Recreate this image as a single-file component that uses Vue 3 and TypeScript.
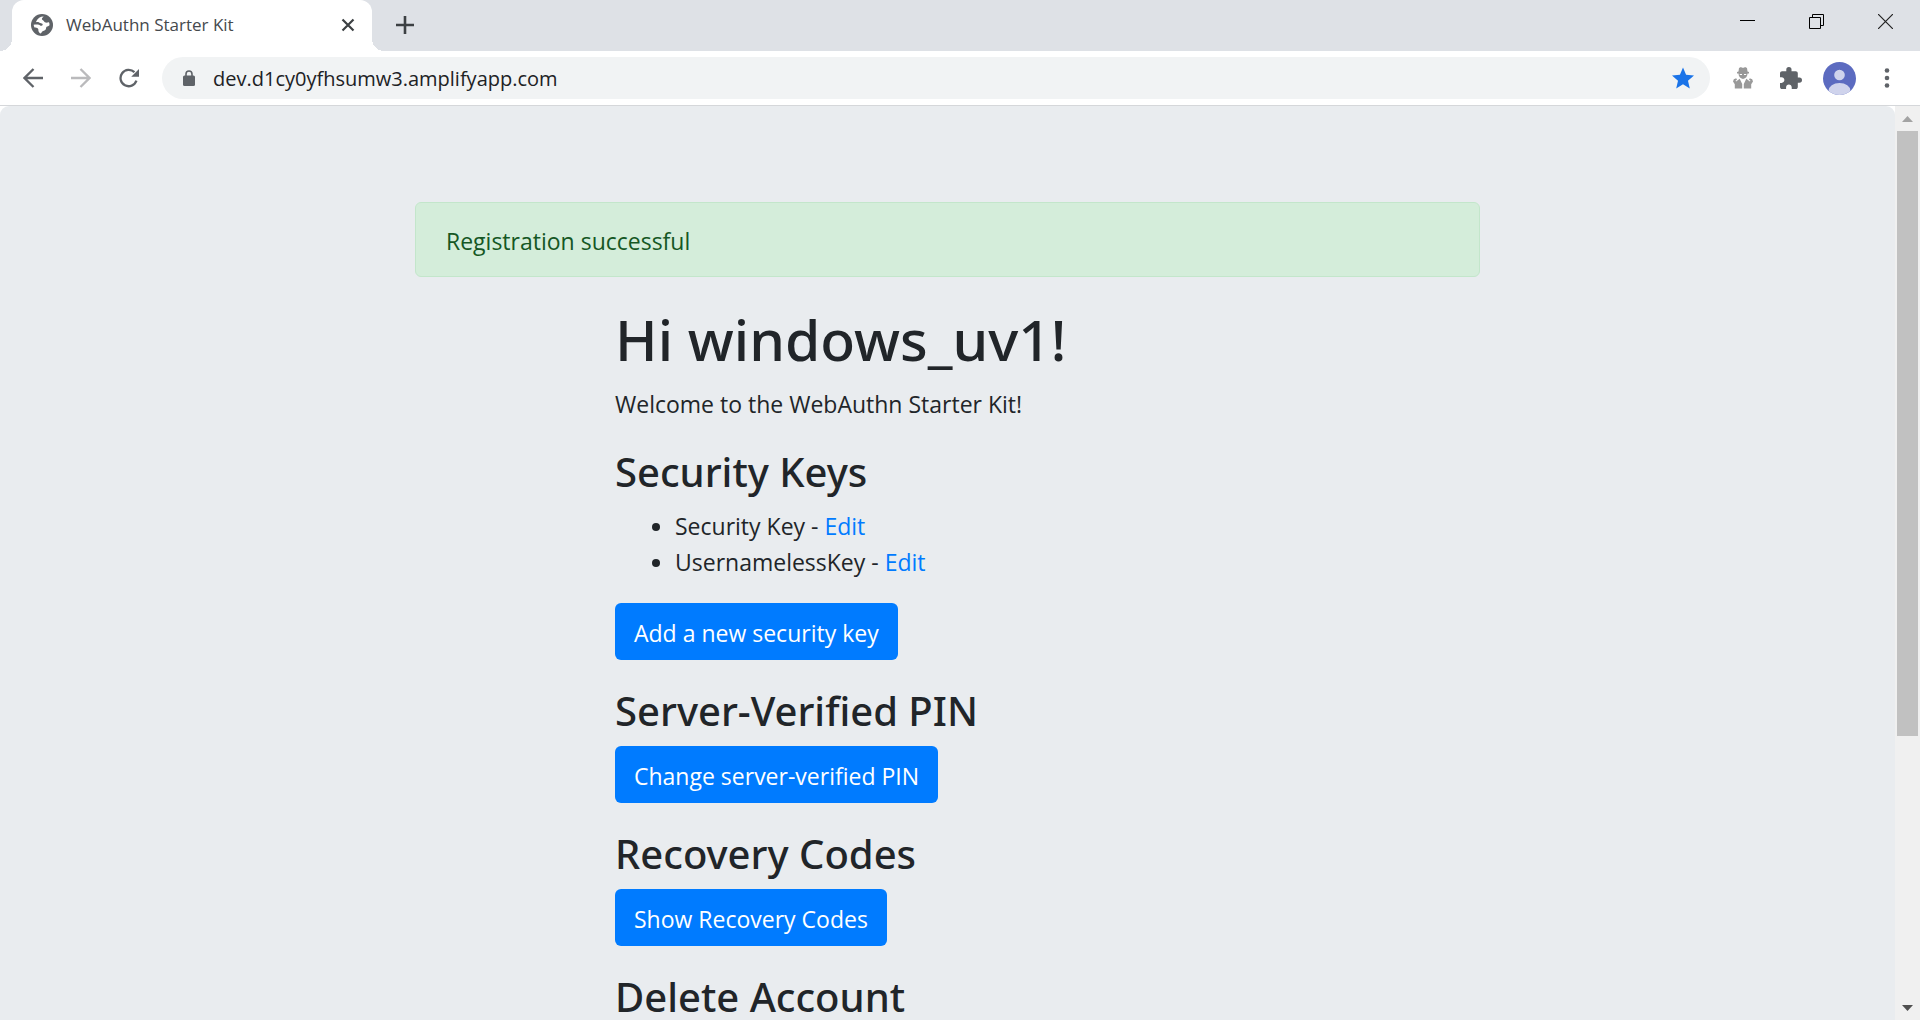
<script setup lang="ts">
import { ref } from 'vue'

interface SecurityKey {
  id: number
  name: string
}

const address = ref('dev.d1cy0yfhsumw3.amplifyapp.com')
const username = ref('windows_uv1')
const keys = ref<SecurityKey[]>([
  { id: 1, name: 'Security Key' },
  { id: 2, name: 'UsernamelessKey' },
])
</script>

<template>
  <div class="browser">
    <header class="tab-strip">
      <div class="tab">
        <svg class="favicon" viewBox="0 0 22 22" aria-hidden="true">
          <circle cx="11" cy="11" r="11" fill="#5f6368" />
          <path
            fill="#fff"
            d="M12.500 2.600C9.500 2.600 6.500 4.500 5 7.800c1.200.8 2.500.2 3.500 1 .9.700 2.200.3 2.900 1 .7.800.1 1.700-.8 1.900-1.200.2-1.600-.5-2.700-1-1.600-.5-3.600-.3-5.300 0 .2 1.100.5 2 .9 2.900 1.500.2 2.500 0 3.400.9.800.8.300 1.900.6 2.800.3.900 1 1.500 1.800 2.200 1.200-.4 1.200-1.500 2-2.100 1-.7 2.400-.6 3.200-1.600.8-.9.3-2.100 1.100-3 .8-.8 2.200-.6 2.900-1.600.1-1-.1-1.900-.4-2.800-1.200-.2-2.300.5-3.500.1-1.200-.4-1.400-1.500-2.400-2.100-.8-.5-1.400-.9-1.300-1.700.1-.7.900-1.200 1.600-2z"
          />
        </svg>
        <span class="tab-title">WebAuthn Starter Kit</span>
        <button class="icon-button" type="button" aria-label="Close tab">
          <svg width="14" height="14" viewBox="0 0 14 14"><path d="M1.500 1.500l11 11M12.500 1.500l-11 11" fill="none" stroke="#3c4043" stroke-width="2.200" /></svg>
        </button>
      </div>
      <button class="icon-button new-tab" type="button" aria-label="New tab">
        <svg width="18" height="18" viewBox="0 0 18 18"><path d="M9 0v18M0 9h18" fill="none" stroke="#3c4043" stroke-width="2.600" /></svg>
      </button>
      <div class="window-controls">
        <button class="icon-button" type="button" aria-label="Minimize">
          <svg width="15" height="15" viewBox="0 0 15 15"><path d="M0 6.500h15" stroke="#000" /></svg>
        </button>
        <button class="icon-button" type="button" aria-label="Restore">
          <svg width="15" height="15" viewBox="0 0 15 15" fill="none" stroke="#000"><path d="M.5 3.500h11v11H.5zM3.500 3.500v-3h11v11h-3" /></svg>
        </button>
        <button class="icon-button" type="button" aria-label="Close">
          <svg width="15" height="15" viewBox="0 0 15 15"><path d="M0 0l15 15M15 0L0 15" stroke="#222" stroke-width="1.200" /></svg>
        </button>
      </div>
    </header>

    <nav class="toolbar">
      <div class="nav-buttons">
        <button class="icon-button" type="button" aria-label="Back">
          <svg width="20" height="20" viewBox="0 0 20 20"><path d="M20 10H2M10.500 1L1.500 10l9 9" fill="none" stroke="#5f6368" stroke-width="2.300" /></svg>
        </button>
        <button class="icon-button" type="button" aria-label="Forward">
          <svg width="20" height="20" viewBox="0 0 20 20"><path d="M0 10h18M9.500 1l9 9-9 9" fill="none" stroke="#bababc" stroke-width="2.300" /></svg>
        </button>
        <button class="icon-button" type="button" aria-label="Reload">
          <svg width="20" height="20" viewBox="0 0 22 22">
            <path d="M19.200 14A9 9 0 1 1 17 4.600" fill="none" stroke="#5f6368" stroke-width="2.500" />
            <path d="M22 1v8.500h-8.500z" fill="#5f6368" />
          </svg>
        </button>
      </div>
      <div class="omnibox">
        <svg class="lock" width="12" height="16" viewBox="0 0 12 16">
          <path d="M3 6V4a3 3 0 0 1 6 0v2" fill="none" stroke="#5f6368" stroke-width="1.600" />
          <rect y="5.500" width="12" height="10.500" rx="1.500" fill="#5f6368" />
        </svg>
        <input v-model="address" class="address" type="text" aria-label="Address" spellcheck="false" />
        <button class="icon-button" type="button" aria-label="Edit bookmark">
          <svg width="22" height="22" viewBox="2 1.500 20 20">
            <path fill="#1a73e8" d="M12 17.270L18.180 21l-1.640-7.030L22 9.240l-7.190-.61L12 2 9.190 8.630 2 9.240l5.460 4.730L5.820 21z" />
          </svg>
        </button>
      </div>
      <div class="actions">
        <button class="icon-button" type="button" aria-label="Incognito extension">
          <svg width="20" height="22" viewBox="0 0 20 22" fill="#999">
            <path d="M5.500 4.500L6 1l2-.9 1 .6h2l1-.6L14 1l.5 3.500 1.500.5v1.500h-1.500c0 3-1.800 5-4.500 5.500-2.700-.5-4.500-2.500-4.500-5.500H4V5z" />
            <path d="M6.800 7h2.200v1H6.800zM11 7h2.200v1H11z" fill="#fff" />
            <path d="M1.800 21.500v-4.300L0 14.600l.8-2.300 2.400-1 .8 1.500-1.500.9.600.9 3.600-2.800L9.200 17v4.500zM18.200 21.500v-4.300l1.800-2.600-.8-2.300-2.400-1-.8 1.500 1.500.9-.6.9-3.600-2.800-2.500 5.200v4.500z" />
          </svg>
        </button>
        <button class="icon-button" type="button" aria-label="Extensions">
          <svg width="22" height="22" viewBox="2 1 21 21">
            <path fill="#5f6368" d="M20.500 11H19V7c0-1.100-.9-2-2-2h-4V3.500a2.500 2.500 0 0 0-5 0V5H4c-1.100 0-1.990.9-1.990 2v3.800H3.500c1.490 0 2.700 1.210 2.700 2.700s-1.210 2.700-2.700 2.700H2V20c0 1.100.9 2 2 2h3.800v-1.500c0-1.490 1.210-2.700 2.700-2.700s2.700 1.210 2.700 2.700V22H17c1.100 0 2-.9 2-2v-4h1.500a2.500 2.500 0 0 0 0-5z" />
          </svg>
        </button>
        <button class="icon-button" type="button" aria-label="Profile">
          <svg width="33" height="33" viewBox="0 0 33 33">
            <clipPath id="avatar-clip"><circle cx="16.500" cy="16.500" r="16.500" /></clipPath>
            <g clip-path="url(#avatar-clip)">
              <path d="M0 0h33v33H0z" fill="#5c6bc0" />
              <circle cx="16.500" cy="13" r="5.300" fill="#cfd3ec" />
              <ellipse cx="16.500" cy="29" rx="11" ry="8" fill="#cfd3ec" />
            </g>
          </svg>
        </button>
        <button class="icon-button" type="button" aria-label="Menu">
          <svg width="6" height="20" viewBox="0 0 6 20" fill="#5f6368"><circle cx="3" cy="2.500" r="2.300" /><circle cx="3" cy="10" r="2.300" /><circle cx="3" cy="17.500" r="2.300" /></svg>
        </button>
      </div>
    </nav>

    <div class="viewport">
      <main class="page">
        <div class="alert" role="alert">Registration successful</div>
        <div class="content">
          <h1>Hi {{ username }}!</h1>
          <p>Welcome to the WebAuthn Starter Kit!</p>
          <section>
            <h2>Security Keys</h2>
            <ul>
              <li v-for="key in keys" :key="key.id">{{ key.name }} - <a href="#">Edit</a></li>
            </ul>
            <button class="primary" type="button">Add a new security key</button>
          </section>
          <section>
            <h2>Server-Verified PIN</h2>
            <button class="primary" type="button">Change server-verified PIN</button>
          </section>
          <section>
            <h2>Recovery Codes</h2>
            <button class="primary" type="button">Show Recovery Codes</button>
          </section>
          <section>
            <h2>Delete Account</h2>
          </section>
        </div>
      </main>
      <div class="scrollbar" aria-hidden="true">
        <svg class="arrow" viewBox="0 0 25 25"><path d="M7 16l5.500-6 5.500 6z" fill="#a3a3a3" /></svg>
        <div class="track"><div class="thumb"></div></div>
        <svg class="arrow" viewBox="0 0 25 25"><path d="M7 10l5.500 6 5.500-6z" fill="#505050" /></svg>
      </div>
    </div>
  </div>
</template>

<style>
body {
  margin: 0;
}
</style>

<style scoped>
.browser {
  display: flex;
  flex-direction: column;
  height: 100vh;
  overflow: hidden;
  background: #fff;
  color: #212529;
  font-family: 'Open Sans', 'Noto Sans', sans-serif;
}

.icon-button {
  display: flex;
  align-items: center;
  justify-content: center;
  flex: none;
  padding: 0;
  border: 0;
  background: none;
}

.tab-strip {
  display: flex;
  flex: none;
  height: 51px;
  padding-left: 12px;
  background: #dee1e6;
}

.tab {
  position: relative;
  display: flex;
  align-items: center;
  box-sizing: border-box;
  width: 360px;
  padding: 0 17px 1px 19px;
  border-radius: 12px 12px 0 0;
  background: #fff;
}

.tab::before,
.tab::after {
  content: '';
  position: absolute;
  bottom: 0;
  width: 12px;
  height: 12px;
}

.tab::before {
  right: 100%;
  background: radial-gradient(circle at 0 0, transparent 12px, #fff 12px);
}

.tab::after {
  left: 100%;
  background: radial-gradient(circle at 100% 0, transparent 12px, #fff 12px);
}

.favicon {
  width: 22px;
  height: 22px;
}

.tab-title {
  flex: 1;
  margin-left: 13px;
  color: #45494d;
  font-size: 17px;
  line-height: 24px;
}

.new-tab {
  height: 50px;
  margin-left: 24px;
}

.window-controls {
  display: flex;
  height: 43px;
  margin-left: auto;
}

.window-controls .icon-button {
  width: 69px;
}

.toolbar {
  display: flex;
  align-items: center;
  flex: none;
  height: 54px;
  padding: 0 9px 0 23px;
  border-bottom: 1px solid #d5d7da;
}

.nav-buttons {
  display: flex;
  gap: 28px;
}

.omnibox {
  display: flex;
  align-items: center;
  flex: 1;
  box-sizing: border-box;
  height: 42px;
  margin: 0 9px 0 23px;
  padding: 0 16px 0 21px;
  border-radius: 21px;
  background: #f1f3f4;
}

.address {
  flex: 1;
  min-width: 0;
  margin-left: 18px;
  padding: 0;
  border: 0;
  outline: 0;
  background: none;
  color: #202124;
  font-family: inherit;
  font-size: 20px;
}

.actions {
  display: flex;
  align-items: center;
}

.actions .icon-button {
  width: 48px;
}

.viewport {
  display: flex;
  flex: 1;
  min-height: 0;
}

.page {
  flex: 1;
  min-width: 0;
  box-sizing: border-box;
  padding: 96px 32px 0;
  border-radius: 9px 9px 0 0;
  overflow: hidden;
  background: #e9ecef;
  font-size: 23px;
  line-height: 36px;
}

.alert {
  box-sizing: border-box;
  max-width: 1065px;
  margin: 0 auto 24px;
  padding: 20px 30px 17px;
  border: 1px solid #c3e6cb;
  border-radius: 6px;
  background: #d4edda;
  color: #155724;
}

.content {
  max-width: 665px;
  margin: 0 auto;
}

h1,
h2 {
  margin: 0;
  font-family: 'Noto Sans', 'Open Sans', sans-serif;
  font-weight: 500;
}

h1 {
  font-size: 57px;
  line-height: 76px;
  margin-bottom: 9px;
}

h2 {
  font-size: 40px;
  line-height: 70px;
}

p {
  margin: 0 0 15px;
}

ul {
  margin: 0 0 23px;
  padding: 1px 0 0 60px;
}

a {
  color: #007bff;
  text-decoration: none;
}

section {
  margin-bottom: 16px;
}

.primary {
  display: block;
  height: 57px;
  padding: 2px 19px 0;
  border: 0;
  border-radius: 6px;
  background: #007bff;
  color: #fff;
  font: inherit;
}

.scrollbar {
  display: flex;
  flex-direction: column;
  flex: none;
  width: 25px;
  background: #f0f0f0;
}

.arrow {
  flex: none;
  width: 25px;
  height: 25px;
}

.track {
  flex: 1;
  padding: 0 2px;
}

.thumb {
  height: 70%;
  background: #c1c1c1;
}
</style>
